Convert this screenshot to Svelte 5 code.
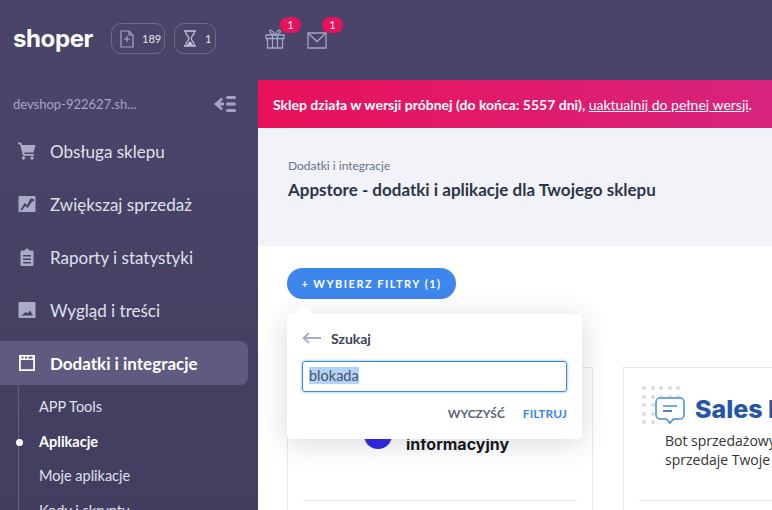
<script>
    const navItems = [
        { label: "Obsługa sklepu", icon: "cart" },
        { label: "Zwiększaj sprzedaż", icon: "chart" },
        { label: "Raporty i statystyki", icon: "clipboard" },
        { label: "Wygląd i treści", icon: "image" },
        { label: "Dodatki i integracje", icon: "window", active: true },
    ];

    const subItems = [
        { label: "APP Tools" },
        { label: "Aplikacje", current: true },
        { label: "Moje aplikacje" },
        { label: "Kody i skrypty" },
    ];

    const dotRows = [0, 1, 2, 3, 4];
</script>

<div class="page">
    <header class="topbar">
        <div class="logo">shoper</div>
        <div class="chip chip-wide">
            <svg width="14" height="18" viewBox="0 0 14 18" fill="none" stroke="#a3a5c4" stroke-width="1.2">
                <path d="M1 1h8l4 4v12H1z" />
                <path d="M9 1v4h4" />
                <path d="M7 6v6M4 9h6" />
            </svg>
            <span>189</span>
        </div>
        <div class="chip chip-narrow">
            <svg width="14" height="17" viewBox="0 0 14 17" fill="none" stroke="#c3c5dc" stroke-width="1.2">
                <path d="M1 1h12M1 16h12" stroke-width="1.6" />
                <path d="M2.5 1c0 4 3 5 3.5 7.500-.5 2.500-3.500 3.500-3.500 7.500M11.500 1c0 4-3 5-3.500 7.500.5 2.500 3.500 3.500 3.500 7.500" />
                <path d="M3.500 15.500L7 11l3.500 4.500z" fill="#c3c5dc" stroke="none" />
            </svg>
            <span>1</span>
        </div>
        <div class="top-icons">
            <div class="top-icon">
                <svg width="20" height="20" viewBox="0 0 20 20" fill="none" stroke="#a3a5c4" stroke-width="1.300">
                    <path d="M1 6h18v3.500H1zM2.500 9.500V19h15V9.500M7.500 6v13M12.500 6v13" />
                    <path d="M10 6C8 2 6 .5 5 1.500S5.500 5.500 10 6c4.500-.5 6-3.500 5-4.500S12 2 10 6z" />
                </svg>
                <span class="badge">1</span>
            </div>
            <div class="top-icon">
                <svg width="20" height="17" viewBox="0 0 20 17" fill="none" stroke="#a3a5c4" stroke-width="1.300">
                    <path d="M1 1h18v15H1z" />
                    <path d="M1 1l9 8.500L19 1" />
                </svg>
                <span class="badge">1</span>
            </div>
        </div>
    </header>

    <div class="body">
        <aside class="sidebar">
            <div class="shop-row">
                <span class="shop-name">devshop-922627.sh...</span>
                <svg width="24" height="18" viewBox="0 0 24 18" fill="#a3a5c4">
                    <path d="M8.500 2.500L1 9l7.500 6.500 1.500-2-3-3h4V7.500H7l3-3z" />
                    <rect x="13" y="1" width="10" height="3" rx="1.500" />
                    <rect x="13" y="7.500" width="10" height="3" rx="1.500" />
                    <rect x="13" y="14" width="10" height="3" rx="1.500" />
                </svg>
            </div>

            <nav class="nav">
                {#each navItems as item}
                    <div class="nav-item" class:active={item.active}>
                        <svg class="nav-icon" width="18" height="18" viewBox="0 0 18 18" fill="currentColor">
                            {#if item.icon === "cart"}
                                <path d="M0 .5h3.200l.8 2.500h13.500l-2 7.500H6.200l.4 1.500H16v1.800H5L2 2.300H0z" />
                                <circle cx="5.500" cy="16" r="1.700" />
                                <circle cx="14" cy="16" r="1.700" />
                            {:else if item.icon === "chart"}
                                <path fill-rule="evenodd" d="M1.500 1h15a1 1 0 0 1 1 1v14a1 1 0 0 1-1 1h-15a1 1 0 0 1-1-1V2a1 1 0 0 1 1-1zM2.500 14.500l1.300 1 3.500-4.500 2.500 2 4.500-7 1.700 1V4l-3.500-.5-3.300 6.500-2.500-2z" />
                            {:else if item.icon === "clipboard"}
                                <path fill-rule="evenodd" d="M7 2.500a2 2 0 0 1 4 0h3.500a1 1 0 0 1 1 1V17a1 1 0 0 1-1 1h-11a1 1 0 0 1-1-1V3.500a1 1 0 0 1 1-1zM5 7v1.500h8V7zM5 10.500V12h8v-1.500zM5 14v1.500h8V14z" />
                            {:else if item.icon === "image"}
                                <path fill-rule="evenodd" d="M1.500 1h15a1 1 0 0 1 1 1v14a1 1 0 0 1-1 1h-15a1 1 0 0 1-1-1V2a1 1 0 0 1 1-1zM3 14.500h12l-3-5-2.500 3-1.500-1.500z" />
                            {:else}
                                <path fill-rule="evenodd" d="M1 1h16v16H1zM2.800 6v9.200h12.400V6zM3.500 2.500v2h2v-2zM7 2.500v2h2v-2zM10.500 2.500v2h4v-2z" />
                            {/if}
                        </svg>
                        <span>{item.label}</span>
                    </div>
                {/each}
            </nav>

            <ul class="subnav">
                {#each subItems as sub}
                    <li class:current={sub.current}>{sub.label}</li>
                {/each}
            </ul>
        </aside>

        <main class="main">
            <div class="banner">
                <span>Sklep działa w wersji próbnej (do końca: 5557 dni), <u>uaktualnij do pełnej wersji</u>.</span>
            </div>

            <div class="page-head">
                <div class="crumb">Dodatki i integracje</div>
                <h1>Appstore - dodatki i aplikacje dla Twojego sklepu</h1>
            </div>

            <div class="content">
                <button class="filter-btn">+ WYBIERZ FILTRY (1)</button>

                <div class="popover">
                    <div class="pop-title">
                        <svg width="19" height="12" viewBox="0 0 19 12" fill="none" stroke="#a9abc9" stroke-width="1.800">
                            <path d="M19 6H2M7 1L1.500 6 7 11" />
                        </svg>
                        <span>Szukaj</span>
                    </div>
                    <div class="pop-input"><span class="selected">blokada</span></div>
                    <div class="pop-actions">
                        <span class="clear">WYCZYŚĆ</span>
                        <span class="apply">FILTRUJ</span>
                    </div>
                </div>

                <div class="cards">
                    <div class="card">
                        <div class="card-logo info-logo">
                            <span class="circle"></span>
                            <span class="info-text">informacyjny</span>
                        </div>
                        <div class="card-rule"></div>
                    </div>
                    <div class="card">
                        <div class="card-logo sales-logo">
                            <div class="dots">
                                {#each dotRows as r}
                                    {#each dotRows as c}
                                        {#if !(r === 4 && c > 1)}
                                            <i></i>
                                        {/if}
                                    {/each}
                                {/each}
                            </div>
                            <svg class="bubble" width="30" height="30" viewBox="0 0 30 30" fill="#fff" stroke="#3f8fd8" stroke-width="1.500">
                                <path d="M5 1h20a4 4 0 0 1 4 4v13a4 4 0 0 1-4 4h-6.500L15 26l-3.500-4H5a4 4 0 0 1-4-4V5a4 4 0 0 1 4-4z" />
                                <path d="M8 9h14" stroke="#3f8fd8" />
                                <path d="M8 14h9" stroke="#2f4da8" />
                            </svg>
                            <div class="sales-title">Sales Bot</div>
                            <div class="sales-sub">Bot sprzedażowy, który<br />sprzedaje Twoje produkty</div>
                        </div>
                        <div class="card-rule"></div>
                    </div>
                </div>
            </div>
        </main>
    </div>
</div>

<style>
    :global(body) {
        margin: 0;
        overflow: hidden;
        background: #fff;
    }

    .page {
        width: 772px;
        height: 510px;
        overflow: hidden;
        font-family: "Lato", "Noto Sans", sans-serif;
        background: #4b4469;
    }

    .topbar {
        height: 80px;
        display: flex;
        align-items: center;
        padding-left: 13px;
        padding-bottom: 3px;
        box-sizing: border-box;
        color: #fff;
    }

    .logo {
        width: 98px;
        font-family: "Inter", sans-serif;
        font-weight: 700;
        font-size: 24px;
        letter-spacing: -0.4px;
    }

    .chip {
        display: flex;
        align-items: center;
        height: 31px;
        box-sizing: border-box;
        border: 1px solid #6e6a8c;
        border-radius: 10px;
        font-size: 11px;
        color: #e4e4ee;
    }

    .chip-wide {
        width: 54px;
        gap: 8px;
        padding-left: 8px;
        margin-right: 9px;
    }

    .chip-narrow {
        width: 42px;
        gap: 8px;
        padding-left: 8px;
    }

    .top-icons {
        display: flex;
        gap: 22px;
        margin-left: 49px;
    }

    .top-icon {
        position: relative;
        display: flex;
        align-items: flex-end;
        height: 20px;
    }

    .badge {
        position: absolute;
        left: 15px;
        top: -12px;
        width: 21px;
        height: 16px;
        border-radius: 8px;
        background: #e6135c;
        color: #fff;
        font-size: 11px;
        line-height: 16px;
        text-align: center;
    }

    .body {
        display: flex;
        height: 430px;
    }

    .sidebar {
        width: 258px;
        flex: none;
        background: linear-gradient(#4b4469, #423e5f);
    }

    .shop-row {
        display: flex;
        align-items: center;
        justify-content: space-between;
        height: 48px;
        padding: 0 21px 0 13px;
        color: #a3a5c4;
        font-size: 13px;
    }

    .nav {
        display: flex;
        flex-direction: column;
        padding-top: 0;
    }

    .nav-item {
        display: flex;
        align-items: center;
        height: 46px;
        margin-bottom: 7px;
        margin-right: 10px;
        padding-left: 18px;
        gap: 14px;
        font-size: 17px;
        color: #dfe0ec;
        border-radius: 0 8px 8px 0;
    }

    .nav-icon {
        color: #a9abc9;
        flex: none;
    }

    .nav-item.active {
        height: 44px;
        margin-top: 1px;
        background: #5f5a80;
        color: #fff;
        font-weight: 700;
    }

    .nav-item.active .nav-icon {
        color: #fff;
    }

    .subnav {
        list-style: none;
        margin: -6px 0 0 18px;
        padding: 4px 0 0 20px;
        border-left: 1px solid #64607f;
        font-size: 14.500px;
        color: #dfe0ec;
    }

    .subnav li {
        position: relative;
        height: 34.500px;
        line-height: 34.500px;
    }

    .subnav li.current {
        color: #fff;
        font-weight: 700;
    }

    .subnav li.current::before {
        content: "";
        position: absolute;
        left: -23.500px;
        top: 14px;
        width: 7px;
        height: 7px;
        border-radius: 50%;
        background: #fff;
    }

    .main {
        flex: 1;
        min-width: 0;
        background: #fff;
    }

    .banner {
        height: 48px;
        display: flex;
        align-items: center;
        padding-left: 15px;
        white-space: nowrap;
        color: #fff;
        font-size: 14px;
        font-weight: 700;
        background: linear-gradient(90deg, #e9115a, #d8247d);
    }

    .banner u {
        font-weight: 400;
    }

    .page-head {
        height: 118px;
        box-sizing: border-box;
        padding: 29px 30px 0;
        background: #f2f3f8;
    }

    .crumb {
        font-size: 12px;
        line-height: 17px;
        color: #6a7189;
    }

    h1 {
        margin: 4px 0 0;
        font-size: 17px;
        line-height: 24px;
        font-weight: 700;
        color: #2c3549;
    }

    .content {
        position: relative;
        padding: 22px 29px 0;
    }

    .filter-btn {
        display: block;
        width: 169px;
        height: 31px;
        padding: 0;
        border: none;
        border-radius: 16px;
        background: #3d86ec;
        color: #fff;
        font-family: inherit;
        font-size: 11px;
        font-weight: 700;
        letter-spacing: 1.500px;
    }

    .popover {
        position: absolute;
        z-index: 2;
        left: 29px;
        top: 68px;
        width: 295px;
        height: 125px;
        box-sizing: border-box;
        padding: 14px 15px;
        background: #fff;
        border-radius: 4px;
        box-shadow: 0 4px 28px rgba(40, 44, 70, 0.18);
    }

    .popover::before {
        content: "";
        position: absolute;
        left: 9px;
        top: -7px;
        width: 14px;
        height: 14px;
        background: #fff;
        transform: rotate(45deg);
    }

    .pop-title {
        display: flex;
        align-items: center;
        gap: 10px;
        height: 20px;
        font-size: 14px;
        font-weight: 700;
        color: #3a4256;
    }

    .pop-input {
        margin-top: 13px;
        height: 31px;
        box-sizing: border-box;
        padding: 0 6px;
        line-height: 28px;
        border: 1px solid #3d86ec;
        border-radius: 3px;
        box-shadow: 0 0 2px 1px rgba(61, 134, 236, 0.35);
        font-size: 14.500px;
        color: #4a5166;
    }

    .selected {
        background: #b3d4f8;
    }

    .pop-actions {
        display: flex;
        justify-content: flex-end;
        gap: 18px;
        margin-top: 14px;
        font-size: 12px;
        font-weight: 700;
    }

    .clear {
        color: #5a6178;
    }

    .apply {
        color: #3d86ec;
    }

    .cards {
        display: flex;
        gap: 30px;
        margin-top: 68px;
    }

    .card {
        width: 306px;
        height: 200px;
        flex: none;
        box-sizing: border-box;
        padding: 0 15px;
        border: 1px solid #e8e9ee;
    }

    .card-logo {
        position: relative;
        height: 132px;
        border-bottom: 1px solid #e8e9ee;
    }

    .card-rule {
        display: none;
    }

    .circle {
        position: absolute;
        left: 61px;
        top: 53px;
        width: 28px;
        height: 28px;
        border-radius: 50%;
        background: #2f28e8;
    }

    .info-text {
        position: absolute;
        left: 103px;
        top: 66px;
        font-family: "Inter", sans-serif;
        font-size: 16px;
        font-weight: 700;
        color: #16161a;
    }

    .dots {
        position: absolute;
        left: 3px;
        top: 18px;
        display: grid;
        grid-template-columns: repeat(5, 4px);
        gap: 4.500px;
    }

    .dots i {
        width: 4px;
        height: 4px;
        border-radius: 50%;
        background: #dcdcdc;
    }

    .bubble {
        position: absolute;
        left: 16px;
        top: 29px;
    }

    .sales-title {
        position: absolute;
        left: 56px;
        top: 26px;
        white-space: nowrap;
        font-family: "Inter", sans-serif;
        font-size: 25px;
        font-weight: 800;
        color: #2556a8;
    }

    .sales-sub {
        position: absolute;
        left: 26px;
        top: 63px;
        white-space: nowrap;
        font-family: "Open Sans", sans-serif;
        font-size: 14px;
        line-height: 19px;
        color: #333;
    }
</style>
